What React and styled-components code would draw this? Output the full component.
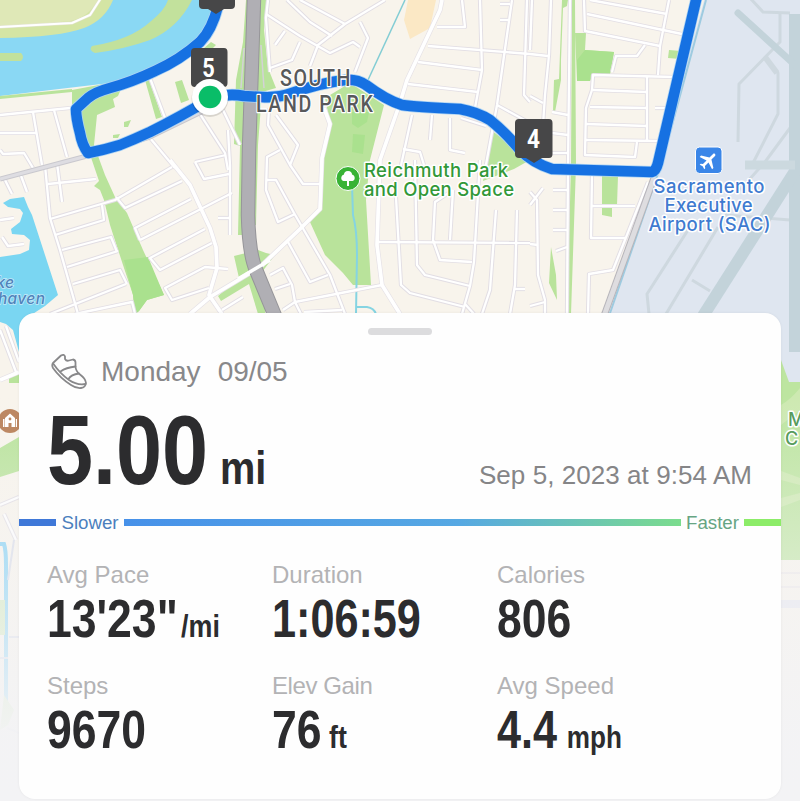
import styled, { createGlobalStyle } from 'styled-components';

const GlobalStyle = createGlobalStyle`
  body {
    margin: 0;
    font-family: "Liberation Sans", Arial, sans-serif;
    background: #f2f2f4;
  }
`;

const Screen = styled.div`
  position: relative;
  width: 800px;
  height: 801px;
  overflow: hidden;
  box-sizing: border-box;
  padding: 313px 19px 0;
`;

const MapCanvas = styled.svg`
  position: absolute;
  top: 0;
  left: 0;
`;

const Card = styled.section`
  position: relative;
  height: 486px;
  background: #fefefe;
  border-radius: 16px;
  box-shadow: 0 0 3px rgba(0, 0, 0, 0.06);
  overflow: hidden;
`;

const Handle = styled.div`
  width: 64px;
  height: 7px;
  margin: 15px auto 0;
  border-radius: 4px;
  background: #dcdcde;
`;

const TitleRow = styled.header`
  display: flex;
  align-items: center;
  height: 40px;
  margin-top: 17px;
  padding-left: 32px;
  font-size: 28px;
  color: #88888a;
`;

const Day = styled.span`
  margin: 0 17px 0 14px;
`;

const DistanceRow = styled.div`
  display: flex;
  align-items: baseline;
  justify-content: space-between;
  height: 98px;
  margin-top: 9px;
  padding: 0 29px 0 28px;
`;

const Figure = styled.div`
  font-size: ${props => props.size}px;
  line-height: 1;
  font-weight: 700;
  color: #2c2c2e;
  white-space: nowrap;
  transform: scaleX(${props => props.narrow || 0.84});
  transform-origin: left;
`;

const Unit = styled.span`
  font-size: ${props => props.size}px;
  margin-left: ${props => props.gap}px;
`;

const DateText = styled.span`
  font-size: 26px;
  letter-spacing: 0.06px;
  color: #858587;
`;

const PaceScale = styled.div`
  display: flex;
  align-items: center;
  height: 23px;
  margin-top: 12px;
  font-size: 18.7px;
`;

const ScaleBar = styled.div`
  height: 7px;
  ${props => (props.width ? `width: ${props.width}px` : 'flex: 1')};
  background: ${props => props.fill};
`;

const ScaleLabel = styled.span`
  width: ${props => props.width}px;
  text-align: center;
  color: ${props => props.color};
`;

const Stats = styled.div`
  display: grid;
  grid-template-columns: repeat(3, 225px);
  row-gap: 26.5px;
  margin-top: 27px;
  padding-left: 28px;
`;

const StatLabel = styled.div`
  margin-bottom: 3px;
  font-size: 24px;
  line-height: 28px;
  letter-spacing: ${props => props.tracking || 0}px;
  color: #b3b3b5;
`;

const stats = [
  { label: 'Avg Pace', value: `13'23"`, unit: '/mi', gap: 4 },
  { label: 'Duration', value: '1:06:59', narrow: 0.815 },
  { label: 'Calories', value: '806' },
  { label: 'Steps', value: '9670' },
  { label: 'Elev Gain', value: '76', unit: 'ft', gap: 9, tracking: -0.4 },
  { label: 'Avg Speed', value: '4.4', unit: 'mph', gap: 12, narrow: 0.815 },
];

const streets = [
  // west side
  '0,115 70,108', '0,133 36,133', '33,112 42,165', '54,110 67,157', '0,150 3,154 24,153 33,168',
  '45,165 50,218 60,250 78,314', '57,163 62,202', '48,184 96,179', '50,219 115,200 172,167',
  '55,235 104,220 102,205', '62,250 111,237 117,252', '67,267 118,251', '73,284 120,270 127,284',
  '50,314 126,284', '75,314 132,302 135,314', '20,173 27,192', '4,178 12,194',
  '116,197 125,208 182,181', '140,240 135,228 191,199', '140,240 195,212 232,193',
  '205,229 150,258 160,270 212,243', '228,269 205,267 165,288 172,300 209,288',
  '228,130 230,165 230,235', '218,218 230,218', '195,162 204,179 229,174',
  '222,310 243,297', '150,138 175,168', '150,78 165,118', '200,114 225,153 228,170', '195,162 226,155',
  '223,110 240,145', '0,220 14,218', '2,237 8,246 24,244',
  // south land park
  '268,0 266,18 270,72', '266,14 300,36 330,53 353,42 360,47', '300,0 345,24', '287,0 310,22 332,36',
  '385,0 345,24 318,45 310,66', '360,22 368,38 355,72', '275,45 285,31', '270,68 292,60 300,42',
  '269,108 268,125 290,165 303,184 320,184', '276,115 298,145 290,165', '280,150 267,157 266,190 278,222 295,214',
  '267,180 276,180 294,213 330,275 345,314', '288,242 310,282 328,275',
  '270,275 283,268 292,285 295,302 382,285', '275,289 290,284', '283,310 295,302 301,314',
  '304,312 342,310',
  // centre
  '437,27 465,27 462,0', '428,46 530,54 548,56', '418,62 482,70', '408,84 478,92',
  '480,0 482,70 475,108', '512,0 497,105 485,170', '497,105 530,123', '500,4 510,4', '500,20 510,20',
  '527,0 524,95 530,102', '412,115 400,170', '432,115 430,140', '450,118 450,150 465,153', '461,118 486,126',
  '403,149 420,152 424,165', '376,242 530,243', '395,180 401,285 410,293 465,307', '415,160 417,265 425,275 470,286',
  '453,190 450,240', '453,190 435,202 433,240 440,260 472,262', '480,160 474,262 470,286 462,314', '465,304 474,314',
  '496,210 490,290 482,314', '517,210 515,285 510,314', '515,289 525,289',
  // east
  '551,0 549,55 545,95 543,125', '532,0 530,50', '570,0 568,165 567,314', '584,0 585,31 660,46',
  '590,0 667,14', '587,14 682,34', '669,0 660,46 658,75', '645,45 637,56 616,56 612,72',
  '675,77 593,75 592,90 586,108 585,155 635,157 637,142', '593,90 647,92', '590,107 647,108',
  '586,124 647,126', '586,140 660,141', '647,77 647,140', '655,108 668,108', '530,96 543,103',
  '552,112 568,115', '552,133 568,135', '545,153 568,153', '592,175 591,238 625,238', '592,206 635,206',
  '553,190 567,190', '553,210 567,210', '553,230 567,230', '556,251 567,247', '588,314 589,274 613,270 648,182',
  '530,192 537,200 538,275 545,300 545,314', '530,244 538,245', '530,205 543,188', '530,306 545,302',
  // below the lake
  '0,330 16,372', '6,326 19,362', '0,505 19,497', '4,514 16,540',
];

const avenues = [
  '170,160 190,185 210,228 216,247 217,268 209,295 222,314',
  '190,314 210,297 260,267 300,229 320,209 322,158 330,124 324,108',
  '442,0 440,10 407,80 400,103 380,160 377,245 382,285 400,314',
  '0,380 19,372',
];

const route =
  'M218,6 Q212,30 200,42 Q180,60 155,71 Q132,82 110,88 Q95,92 88,98 L76,109 Q76,118 80,133 Q82,145 88,153 Q104,150 120,145 Q135,139 150,132 Q180,117 212,98 Q228,93 244,96 L262,97 Q278,98 292,93 Q320,83 345,80 Q357,79 366,85 Q386,100 402,105 Q415,107 460,109 Q477,112 490,120 Q505,132 520,150 Q533,163 552,169 L652,172 Q656,171 658,163 L697,-4';

function RoadMap() {
  return (
    <MapCanvas width="800" height="801" viewBox="0 0 800 801">
      <defs>
        <linearGradient id="fade" x1="0" y1="0" x2="0" y2="1">
          <stop offset="0" stopColor="#f3f3f5" stopOpacity="0" />
          <stop offset="0.4" stopColor="#f3f3f5" stopOpacity="0.45" />
          <stop offset="0.85" stopColor="#f3f3f5" stopOpacity="0.97" />
          <stop offset="1" stopColor="#f3f3f5" />
        </linearGradient>
      </defs>
      <rect width="800" height="801" fill="#f8f4ec" />

      {/* river and lake */}
      <path d="M0,0 H226 Q212,40 180,58 L110,83 L0,96 Z" fill="#8ad8f4" />
      <path d="M0,0 H113 Q105,20 84,28 Q60,37 0,38 Z" fill="#d4e5a4" />
      <path d="M0,0 H98 Q88,18 70,21 L0,28 Z" fill="#dfe8b7" />
      <path d="M0,27 L72,23 L90,15 L101,-2" fill="none" stroke="#e5e4d8" strokeWidth="3" />
      <path d="M0,27 L72,23 L90,15 L101,-2" fill="none" stroke="#fff" strokeWidth="2" />
      <path d="M0,53 H21 Q25,57 21,61 H0 Z" fill="#c2e19c" />
      <path d="M92,46 Q130,40 150,22 Q165,10 168,0 H192 Q178,28 150,40 Q125,49 95,53 Q88,50 92,46 Z" fill="#c2e19c" />
      <path d="M3,203 L10,199 L24,197 L28,207 L32,215 L58,295 L45,306 L28,317 L19,352 L13,330 L6,324 L0,322 V257 L20,254 L29,250 L30,240 L24,235 L12,234 L11,229 L20,222 L23,213 L20,209 L8,207 Z" fill="#7ad6f2" />

      {/* parks */}
      <g fill="#b9e39b">
        <path d="M0,96 L72,89 L72,92 L0,99 Z" />
        <path d="M72,90 L125,80 L118,96 L113,99 L115,107 L97,115 L94,145 L105,175 L115,197 L127,213 L143,250 L164,295 L147,300 L139,311 L135,314 L133,295 L123,265 L110,225 L104,200 L100,190 L94,186 L99,181 L80,125 L72,108 Z" />
        <path d="M175,82 L182,80 L189,100 L181,103 Z M145,80 L149,80 L162,117 L156,119 Z M124,122 L131,120 L128,127 L124,127 Z M113,135 L120,134 L118,138 H113 Z" />
        <path d="M211,42 L216,45 L209,52 L203,49 Z" />
        <path d="M260,0 H267 L264,30 L268,68 L276,88 L262,92 L258,145 L256,225 H252 Z M243,42 L246,0 L250,0 V235 H238 L240,146 L234,144 L236,80 Z" />
        <path d="M234,256 L258,250 L266,253 L275,255 L262,272 L268,290 L265,314 L258,314 L249,284 L221,301 L218,296 L239,278 Z" />
        <path d="M325,98 L350,83 L384,105 L370,160 L366,200 L371,285 L353,285 L343,273 L325,255 L310,222 L321,208 L323,160 L330,122 Z" />
        <path d="M491,130 L530,160 L514,169 L483,181 Z" />
        <path d="M572,0 H575 L576,165 L571,314 H567 L571,165 Z" />
        <path d="M562,0 H568 L567,6 L563,8 L561,60 V80 L555,112 L553,111 L554,80 L559,79 Z" />
        <path d="M575,33 H586 L585,50 L614,52 L610,74 H593 L590,81 H577 Z M669,50 L681,51 L680,59 L668,58 Z" />
        <path d="M602,176 H618 L617,205 L612,206 V217 L602,215 Z M551,247 L556,275 L557,300 L549,283 Z" />
        <path d="M0,448 L19,437 V471 L0,477 Z M9,377 L19,373 V383 H9 Z" />
      </g>
      <path d="M124,260 L148,257 L164,295 L147,300 L139,311 L135,314 L133,295 Z" fill="#aae18e" />
      <path d="M577,60 L585,50 L614,52 L610,74 H593 L590,81 H577 Z M352,112 H369 L367,122 L358,128 L352,124 Z M353,134 L365,135 L363,154 L352,152 Z" fill="#aae18e" />
      <path d="M408,0 H436 L430,28 L410,39 L404,20 Z" fill="#fbe8c5" />
      <path d="M405,0 L368,80" stroke="#83cdd4" strokeWidth="1.5" />
      <path d="M352,185 L353,215 Q357,230 357,255 L356,314 M356,307 H367 Q374,308 376,314" fill="none" stroke="#85d4e2" strokeWidth="2" />

      {/* streets */}
      <g fill="none" strokeLinejoin="round">
        <g stroke="#e2dee4" strokeWidth="4.2">
          {streets.map(points => <polyline key={points} points={points} />)}
        </g>
        <g stroke="#e5e1e6" strokeWidth="5">
          {avenues.map(points => <polyline key={points} points={points} />)}
        </g>
        <g stroke="#fff" strokeWidth="2.3">
          {streets.map(points => <polyline key={points} points={points} />)}
        </g>
        <g stroke="#fff" strokeWidth="3.7">
          {avenues.map(points => <polyline key={points} points={points} />)}
        </g>
        <path d="M0,179 L87,156 L150,137 L220,103" stroke="#c9c8ce" strokeWidth="5" />
        <path d="M0,179 L87,156 L150,137 L220,103" stroke="#dedde2" strokeWidth="3" />
        <path d="M254,-2 L252,60 L249,150 L248,215 Q249,254 256,270 L275,316" stroke="#969599" strokeWidth="14.5" />
        <path d="M254,-2 L252,60 L249,150 L248,215 Q249,254 256,270 L275,316" stroke="#b0afb4" strokeWidth="12.5" />
        <polyline points="238,279 270,260" stroke="#fff" strokeWidth="3.5" />
        <path d="M244,48 L241,88 M261,45 L264,88" stroke="#d3d2d6" strokeWidth="1.5" />
      </g>

      {/* airport */}
      <path d="M704,0 H800 V383 H781 V330 L604,330 L656,172 Z" fill="#dfe6f0" />
      <g fill="none" stroke="#ced8df" strokeWidth="3">
        <polyline points="750,-2 763,12 790,13" />
        <polyline points="780,13 780,42 739,84 738,142" />
        <polyline points="765,57 778,73 778,114 752,165" />
        <polyline points="765,57 777,73" strokeWidth="6" />
        <polyline points="790,128 765,162 740,190" />
        <polyline points="688,230 647,294 649,314" />
        <polyline points="718,227 666,314" />
        <polyline points="692,280 710,291" />
        <polyline points="725,215 790,220" />
      </g>
      <path d="M789,14 H800 V352 H789 Z" fill="#c3d3da" />
      <path d="M738,13 L795,65" stroke="#c3d3da" strokeWidth="7" strokeLinecap="round" />
      <path d="M799,165 L703,316" stroke="#c3d3da" strokeWidth="12" />
      <path d="M745,165 H795" stroke="#ccd9df" strokeWidth="9" />
      <path d="M706,0 L662,162 L609,316" stroke="#9ecbe0" strokeWidth="2" fill="none" />
      <path d="M654,178 L604,316" stroke="#b7b5bb" strokeWidth="7" />
      <path d="M654,178 L604,316" stroke="#dedde0" strokeWidth="5" />

      {/* strips beside the card */}
      <path d="M781,360 L789,382 H800 V560 H781 Z" fill="#bde5a0" />
      <path d="M781,405 Q790,400 800,388 V410 L781,425 Z M781,471 L800,478 V485 L781,480 Z M781,498 L800,493 V500 L781,507 Z" fill="#cde9b1" />
      <path d="M781,573 H800 M781,587 H800" stroke="#ece8e8" strokeWidth="2" />
      <path d="M781,600 H800 V608 H781 Z" fill="#e4e5ee" />
      <path d="M-2,544 H4 Q6,550 6,565 V715" stroke="#7dcff4" strokeWidth="4" fill="none" />
      <path d="M0,600 H5 V635 H0 Z M4,695 L14,710 L8,725 L0,730 Z" fill="#cfe9b7" />
      <path d="M0,658 H8 M14,540 L8,580 M9,637 H19 M7,728 L19,733" stroke="#d7dbe8" strokeWidth="2" />
      <rect y="395" width="800" height="406" fill="url(#fade)" />

      <path d={route} fill="none" stroke="#acd3f4" strokeWidth="12" strokeLinejoin="round" />
      <path d={route} fill="none" stroke="#1671e2" strokeWidth="10.5" strokeLinejoin="round" />

      {/* place labels */}
      <g fontFamily="Inter, Roboto, sans-serif" fontWeight="500" stroke="#fff" strokeWidth="3" strokeLinejoin="round" paintOrder="stroke">
        <g fill="#329838" fontSize="18.5">
          <text x="364" y="176.5" textLength="144">Reichmuth Park</text>
          <text x="364" y="195.5" textLength="150">and Open Space</text>
        </g>
        <g fill="#3f7bd0" fontSize="18.5" textAnchor="middle">
          <text x="709" y="192.5" textLength="111">Sacramento</text>
          <text x="708.5" y="211.5" textLength="88">Executive</text>
          <text x="709.5" y="230.5" textLength="122">Airport (SAC)</text>
        </g>
        <g fill="#589c5d" fontSize="18">
          <text x="788" y="426">M</text>
          <text x="785" y="445">C</text>
        </g>
      </g>
      <g fontFamily="Inter, sans-serif" fontStyle="italic" fontWeight="500" fontSize="15.5" letterSpacing="0.4" fill="#5084bb" stroke="#c5e9f8" strokeWidth="1.5" paintOrder="stroke" textAnchor="end">
        <text x="14.5" y="288">ke</text>
        <text x="45.5" y="304">haven</text>
      </g>

      <g fontFamily="Roboto, sans-serif" fontWeight="500" fontSize="24.5" fill="#58595b" stroke="#fff" strokeWidth="2.6" strokeLinejoin="round" paintOrder="stroke">
        <text transform="translate(280 86) scale(.8 1)" textLength="88">SOUTH</text>
        <text transform="translate(256 111.5) scale(.8 1)" textLength="146">LAND PARK</text>
      </g>

      {/* poi icons */}
      <circle cx="348" cy="178.5" r="12" fill="#39b335" stroke="#fff" strokeWidth="1" />
      <path d="M348,171 C351,171 352,173 352,174.500 C355,175 356,180 352.500,181 H349 V186 H347 V181 H343.500 C340,180 341,175 344,174.500 C344,173 345,171 348,171 Z" fill="#fff" />
      <rect x="695.5" y="147" width="26.5" height="26.5" rx="4" fill="#3a86e8" stroke="#fff" strokeWidth="1" />
      <path d="M21 16v-2l-8-5V3.500C13 2.700 12.300 2 11.500 2S10 2.700 10 3.500V9l-8 5v2l8-2.500V19l-2 1.500V22l3.500-1 3.500 1v-1.500L13 19v-5.500z" fill="#fff" transform="translate(708.500 160.500) rotate(45) scale(.92) translate(-11.500 -12)" />
      <circle cx="10" cy="421" r="12" fill="#bd8863" />
      <path d="M10,413.500 L15,418 V427 H11.500 V423 H8.500 V427 H5 V418 Z M3,419 H4.500 V427 H3 Z M15.800,419 H17 V427 H15.800 Z" fill="#fff" />
      <circle cx="10" cy="419" r="1.4" fill="#bd8863" />

      {/* mile markers */}
      <g fill="#474748">
        <path d="M199,-20 H235 V5 Q235,9 231,9 H224 L216,14 L208,9 H203 Q199,9 199,5 Z" />
        <path d="M195,48 H224 Q227.500,48 227.500,52 V83 Q227.500,87 224,87 H216 L209,92 L202,87 H195 Q191,87 191,83 V52 Q191,48 195,48 Z" />
        <path d="M519,119 H549 Q552.500,119 552.500,123 V154 Q552.500,158 549,158 H542 L534,163 L526,158 H519 Q515,158 515,154 V123 Q515,119 519,119 Z" />
      </g>
      <g fill="#fff" fontFamily="Roboto, sans-serif" fontWeight="700" fontSize="25.5" textAnchor="middle">
        <text x="208.5" y="77" textLength="12.5" lengthAdjust="spacingAndGlyphs">5</text>
        <text x="533.5" y="148" textLength="13" lengthAdjust="spacingAndGlyphs">4</text>
      </g>
      <circle cx="210" cy="98.5" r="18.5" fill="#000" opacity="0.13" />
      <circle cx="210" cy="97" r="18" fill="#fff" />
      <circle cx="210" cy="97" r="11.3" fill="#09bd68" />
    </MapCanvas>
  );
}

function ShoeIcon() {
  return (
    <svg width="36" height="38" viewBox="0 0 36 38" fill="none" stroke="#88888a" strokeWidth="1.8" strokeLinecap="round" strokeLinejoin="round">
      <path d="M2 10 L10 2.500 Q13 .8 14 3.500 L14 6 Q15.500 8.500 18 7.500 L22 6.500 Q24.500 7 24.500 9.500 V14 Q25 18.500 29 21.500 Q34.500 25.500 35 30 Q34.500 34.500 30 35 Q25 35.500 20 32 Q9 25 2 15 Q.5 12 2 10 Z" />
      <path d="M2.500 11 Q9 20.500 18 27 Q26 32.500 34.500 31 M9.500 18.500 Q15 14.500 24.500 13.500 M17.500 26 Q20 21.500 28 20.500" />
    </svg>
  );
}

export default function App() {
  return (
    <>
      <GlobalStyle />
      <Screen>
        <RoadMap />
        <Card>
          <Handle />
          <TitleRow>
            <ShoeIcon />
            <Day>Monday</Day>
            <span>09/05</span>
          </TitleRow>
          <DistanceRow>
            <Figure size={98} narrow={0.845}>
              5.00<Unit size={47} gap={14}>mi</Unit>
            </Figure>
            <DateText>Sep 5, 2023 at 9:54 AM</DateText>
          </DistanceRow>
          <PaceScale>
            <ScaleBar width={37} fill="#3f78d8" />
            <ScaleLabel width={68} color="#4b7fbd">Slower</ScaleLabel>
            <ScaleBar fill="linear-gradient(90deg, #4791e9, #56a8e3 60%, #7bdc8d)" />
            <ScaleLabel width={63} color="#66a583">Faster</ScaleLabel>
            <ScaleBar width={37} fill="#8cec68" />
          </PaceScale>
          <Stats>
            {stats.map(x => (
              <div key={x.label}>
                <StatLabel tracking={x.tracking}>{x.label}</StatLabel>
                <Figure size={53} narrow={x.narrow}>
                  {x.value}
                  {x.unit && <Unit size={32} gap={x.gap}>{x.unit}</Unit>}
                </Figure>
              </div>
            ))}
          </Stats>
        </Card>
      </Screen>
    </>
  );
}
